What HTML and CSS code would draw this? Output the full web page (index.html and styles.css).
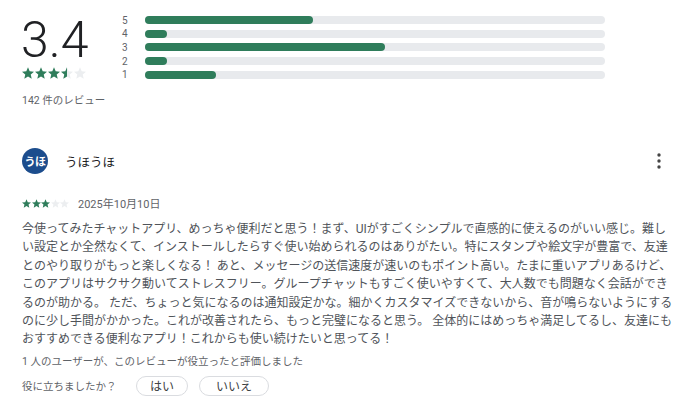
FILE: index.html
```html
<!DOCTYPE html>
<html lang="ja">
<head>
    <meta charset="UTF-8">
    <meta name="viewport" content="width=device-width, initial-scale=1.0">
    <title>レビュー</title>
    <link rel="stylesheet" href="styles.css">
</head>
<body>
    <svg width="0" height="0" class="defs">
        <defs>
            <symbol id="st" viewBox="2 2 20 19">
                <path d="M12 17.27L18.18 21l-1.64-7.03L22 9.24l-7.19-.61L12 2 9.19 8.63 2 9.24l5.46 4.73L5.82 21z"/>
            </symbol>
            <clipPath id="hf"><rect x="0" y="0" width="6" height="12"/></clipPath>
        </defs>
    </svg>

    <div class="sm">
        <div class="sc">
            <div class="nm">3.4</div>
            <div class="bs">
                <svg class="s on"><use href="#st"/></svg>
                <svg class="s on"><use href="#st"/></svg>
                <svg class="s on"><use href="#st"/></svg>
                <svg class="s off" viewBox="0 0 12 12">
                    <use href="#st" width="12" height="12"/>
                    <use href="#st" width="12" height="12" class="on" clip-path="url(#hf)"/>
                </svg>
                <svg class="s off"><use href="#st"/></svg>
            </div>
            <div class="ct">142 件のレビュー</div>
        </div>
        <div class="br">
            <div class="rw"><span class="lb">5</span><div class="tr"><div class="fl" style="width: 36.5%"></div></div></div>
            <div class="rw"><span class="lb">4</span><div class="tr"><div class="fl" style="width: 4.8%"></div></div></div>
            <div class="rw"><span class="lb">3</span><div class="tr"><div class="fl" style="width: 52.2%"></div></div></div>
            <div class="rw"><span class="lb">2</span><div class="tr"><div class="fl" style="width: 4.8%"></div></div></div>
            <div class="rw"><span class="lb">1</span><div class="tr"><div class="fl" style="width: 15.4%"></div></div></div>
        </div>
    </div>

    <div class="rv">
        <div class="hd">
            <div class="av">うほ</div>
            <div class="un">うほうほ</div>
            <svg class="mr" width="16" height="20" viewBox="0 0 16 20">
                <circle cx="8" cy="4" r="1.7"/>
                <circle cx="8" cy="10" r="1.7"/>
                <circle cx="8" cy="16" r="1.7"/>
            </svg>
        </div>
        <div class="mt">
            <div class="ss">
                <svg class="x on"><use href="#st"/></svg>
                <svg class="x on"><use href="#st"/></svg>
                <svg class="x on"><use href="#st"/></svg>
                <svg class="x off"><use href="#st"/></svg>
                <svg class="x off"><use href="#st"/></svg>
            </div>
            <span class="dt">2025年10月10日</span>
        </div>
        <p class="tx">今使ってみたチャットアプリ、めっちゃ便利だと思う！まず、UIがすごくシンプルで直感的に使えるのがいい感じ。難し<br>い設定とか全然なくて、インストールしたらすぐ使い始められるのはありがたい。特にスタンプや絵文字が豊富で、友達<br>とのやり取りがもっと楽しくなる！ あと、メッセージの送信速度が速いのもポイント高い。たまに重いアプリあるけど、<br>このアプリはサクサク動いてストレスフリー。グループチャットもすごく使いやすくて、大人数でも問題なく会話ができ<br>るのが助かる。 ただ、ちょっと気になるのは通知設定かな。細かくカスタマイズできないから、音が鳴らないようにする<br>のに少し手間がかかった。これが改善されたら、もっと完璧になると思う。 全体的にはめっちゃ満足してるし、友達にも<br>おすすめできる便利なアプリ！これからも使い続けたいと思ってる！</p>
        <div class="hp">1 人のユーザーが、このレビューが役立ったと評価しました</div>
        <div class="qs">
            <span class="ql">役に立ちましたか？</span>
            <button class="bt">はい</button>
            <button class="bt">いいえ</button>
        </div>
    </div>
</body>
</html>
```

FILE: styles.css
```css
body {
    margin: 0;
    padding: 0 22px;
    background: #fff;
    color: #202124;
    font-family: Roboto, "Noto Sans CJK JP", sans-serif;
}
.defs {
    position: absolute;
}
.on {
    fill: #2f7d5b;
}
.off {
    fill: #eceef0;
}
.sm {
    display: flex;
    padding-top: 13px;
}
.sc {
    width: 98px;
}
.nm {
    font-size: 50px;
    line-height: 54px;
    font-weight: 300;
    margin-left: -1px;
}
.bs {
    display: flex;
    gap: 1px;
    height: 12px;
}
.s {
    width: 12px;
    height: 12px;
}
.ct {
    margin-top: 15px;
    font-size: 10.5px;
    line-height: 14px;
    color: #5f6368;
}
.br {
    flex: 1;
    display: flex;
    flex-direction: column;
    gap: 5.7px;
    padding-top: 3px;
    margin-right: 73px;
}
.rw {
    display: flex;
    align-items: center;
    height: 8px;
}
.lb {
    width: 25px;
    padding-left: 2px;
    box-sizing: border-box;
    font-size: 10px;
    color: #5f6368;
}
.tr {
    flex: 1;
    height: 8px;
    border-radius: 4px;
    background: #e8eaed;
}
.fl {
    height: 100%;
    border-radius: 4px;
    background: #2f7d5b;
}
.rv {
    margin-top: 40px;
}
.hd {
    display: flex;
    align-items: center;
    height: 26px;
}
.av {
    width: 26px;
    height: 26px;
    border-radius: 50%;
    background: #1c4d8d;
    color: #fff;
    font-size: 11px;
    font-weight: 700;
    display: flex;
    align-items: center;
    justify-content: center;
    letter-spacing: -0.5px;
}
.un {
    margin-left: 17px;
    font-size: 12.5px;
    flex: 1;
}
.mr {
    fill: #444;
    margin-right: 11px;
}
.mt {
    display: flex;
    align-items: center;
    margin-top: 24px;
    height: 10px;
}
.ss {
    display: flex;
    gap: 0.5px;
}
.x {
    width: 9px;
    height: 9px;
}
.dt {
    margin-left: 9px;
    font-size: 11px;
    color: #5f6368;
}
.tx {
    margin: 12px 0 0;
    font-size: 12px;
    line-height: 18.4px;
    color: #50545a;
    white-space: nowrap;
}
.hp {
    margin-top: 6px;
    font-size: 10.5px;
    line-height: 14px;
    color: #5f6368;
}
.qs {
    display: flex;
    align-items: center;
    margin-top: 7px;
}
.ql {
    width: 114px;
    font-size: 10.5px;
    color: #5f6368;
}
.bt {
    height: 20px;
    padding: 0 16px;
    margin-right: 11px;
    background: #fff;
    border: 1px solid #dadce0;
    border-radius: 10px;
    font-family: Roboto, "Noto Sans CJK JP", sans-serif;
    font-size: 12px;
    color: #3c4043;
}
.bt:first-of-type {
    width: 52px;
    padding: 0;
}
```
